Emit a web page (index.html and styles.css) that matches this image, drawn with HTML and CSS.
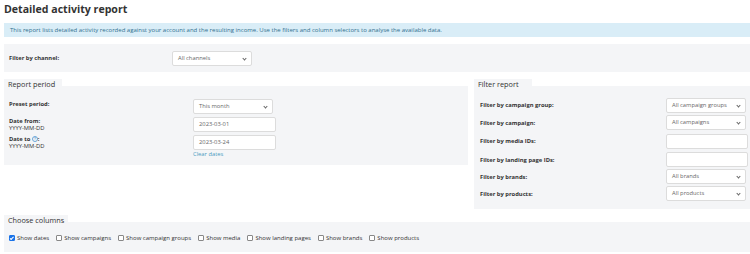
FILE: index.html
```html
<!DOCTYPE html>
<html lang="en">
<head>
    <meta charset="UTF-8">
    <title>Detailed activity report</title>
    <link rel="stylesheet" href="styles.css">
</head>
<body>
    <h1 class="page-title">Detailed activity report</h1>

    <div class="info-bar">This report lists detailed activity recorded against your account and the resulting income. Use the filters and column selectors to analyse the available data.</div>

    <div class="channel-row">
        <label class="field-label">Filter by channel:</label>
        <div class="select">All channels</div>
    </div>

    <div class="panels">
        <!-- Report period -->
        <div class="panel period-panel">
            <div class="legend">Report period</div>
            <div class="panel-body period-grid">
                <div class="field-label">Preset period:</div>
                <div class="select">This month</div>

                <div class="field-label">Date from:<span class="hint">YYYY-MM-DD</span></div>
                <div class="input">2023-03-01</div>

                <div class="field-label">Date to <span class="help-icon">?</span>:<span class="hint">YYYY-MM-DD</span></div>
                <div class="date-to">
                    <div class="input">2023-03-24</div>
                    <a class="clear-link" href="#">Clear dates</a>
                </div>
            </div>
        </div>

        <!-- Filter report -->
        <div class="panel filter-panel">
            <div class="legend">Filter report</div>
            <div class="panel-body filter-grid">
                <div class="field-label">Filter by campaign group:</div>
                <div class="select">All campaign groups</div>

                <div class="field-label">Filter by campaign:</div>
                <div class="select">All campaigns</div>

                <div class="field-label">Filter by media IDs:</div>
                <div class="input wide"></div>

                <div class="field-label">Filter by landing page IDs:</div>
                <div class="input wide"></div>

                <div class="field-label">Filter by brands:</div>
                <div class="select">All brands</div>

                <div class="field-label">Filter by products:</div>
                <div class="select">All products</div>
            </div>
        </div>
    </div>

    <!-- Choose columns -->
    <div class="panel columns-panel">
        <div class="legend">Choose columns</div>
        <div class="panel-body columns-row">
            <label class="check"><span class="box checked"></span>Show dates</label>
            <label class="check"><span class="box"></span>Show campaigns</label>
            <label class="check"><span class="box"></span>Show campaign groups</label>
            <label class="check"><span class="box"></span>Show media</label>
            <label class="check"><span class="box"></span>Show landing pages</label>
            <label class="check"><span class="box"></span>Show brands</label>
            <label class="check"><span class="box"></span>Show products</label>
        </div>
    </div>
</body>
</html>
```

FILE: styles.css
```css
body {
    margin: 0;
    padding: 0 0 0 4px;
    font-family: 'Open Sans', sans-serif;
    color: #333;
    background-color: #fff;
    overflow: hidden;
}

.page-title {
    margin: 0;
    padding-top: 2px;
    height: 21px;
    font-size: 10.6px;
    font-weight: 700;
    color: #333;
}

.info-bar {
    background-color: #d9edf7;
    color: #31708f;
    font-size: 6px;
    height: 14px;
    line-height: 14px;
    padding-left: 6px;
    white-space: nowrap;
}

.channel-row {
    margin-top: 7px;
    background-color: #f4f5f7;
    height: 28px;
    display: flex;
    align-items: center;
    padding-left: 5px;
}

.channel-row .field-label {
    width: 163px;
}

.field-label {
    font-size: 5.8px;
    font-weight: 700;
    color: #333;
    line-height: 8px;
    white-space: nowrap;
}

.hint {
    display: block;
    font-weight: 400;
    line-height: 6px;
}

.help-icon {
    display: inline-block;
    box-sizing: border-box;
    width: 6px;
    height: 6px;
    border: 1px solid #6aa7d8;
    border-radius: 50%;
    color: #6aa7d8;
    font-size: 4px;
    line-height: 4px;
    text-align: center;
    vertical-align: middle;
}

.select, .input {
    box-sizing: border-box;
    background-color: #fff;
    border: 1px solid #dcdcdc;
    border-radius: 2px;
    font-size: 5.8px;
    color: #666;
    height: 15px;
    line-height: 13px;
    padding-left: 5px;
    width: 80px;
    position: relative;
}

.select::after {
    content: '';
    position: absolute;
    right: 5px;
    top: 5px;
    width: 2px;
    height: 2px;
    border-right: 1px solid #666;
    border-bottom: 1px solid #666;
    transform: rotate(45deg);
}

.input {
    width: 83px;
}

.input.wide {
    width: 82px;
}

.panels {
    display: flex;
    gap: 6px;
    margin-top: 7px;
    align-items: flex-start;
}

.legend {
    box-sizing: border-box;
    background-color: #f4f5f7;
    font-size: 7.3px;
    padding: 0 4px;
    height: 7px;
    line-height: 11px;
    color: #333;
    white-space: nowrap;
    width: 58px;
}

.panel-body {
    background-color: #f4f5f7;
}

.period-panel {
    flex: none;
    width: 464px;
}

.period-grid {
    display: grid;
    grid-template-columns: 184px 1fr;
    row-gap: 3px;
    padding: 13px 5px 8px 5px;
    height: 58px;
    align-items: start;
}

.period-grid .field-label:first-child {
    padding-top: 1px;
}

.date-to {
    display: flex;
    flex-direction: column;
}

.clear-link {
    font-size: 5.8px;
    color: #4b9cc1;
    text-decoration: none;
    line-height: 9px;
}

.filter-panel {
    flex: none;
    width: 282px;
}

.filter-grid {
    display: grid;
    grid-template-columns: 186px 1fr;
    grid-template-rows: 18px 17px 20px 17px 17px 17px;
    padding: 10px 6px 7px 6px;
    height: 106px;
    align-items: center;
}

.columns-panel {
    margin-top: 6px;
}

.columns-panel .legend {
    width: 64px;
}

.columns-row {
    display: flex;
    align-items: center;
    height: 30px;
    padding-left: 5px;
    padding-top: 1px;
    box-sizing: border-box;
    gap: 7px;
}

.check {
    display: flex;
    align-items: center;
    font-size: 6px;
    color: #333;
}

.box {
    box-sizing: border-box;
    display: inline-block;
    width: 6px;
    height: 6px;
    border: 1px solid #888;
    border-radius: 1px;
    background-color: #fff;
    margin-right: 2px;
    position: relative;
}

.box.checked {
    background-color: #1a73e8;
    border-color: #1a73e8;
}

.box.checked::after {
    content: '';
    position: absolute;
    left: 1px;
    top: 0;
    width: 1px;
    height: 2.5px;
    border-right: 1px solid #fff;
    border-bottom: 1px solid #fff;
    transform: rotate(45deg);
}
```
